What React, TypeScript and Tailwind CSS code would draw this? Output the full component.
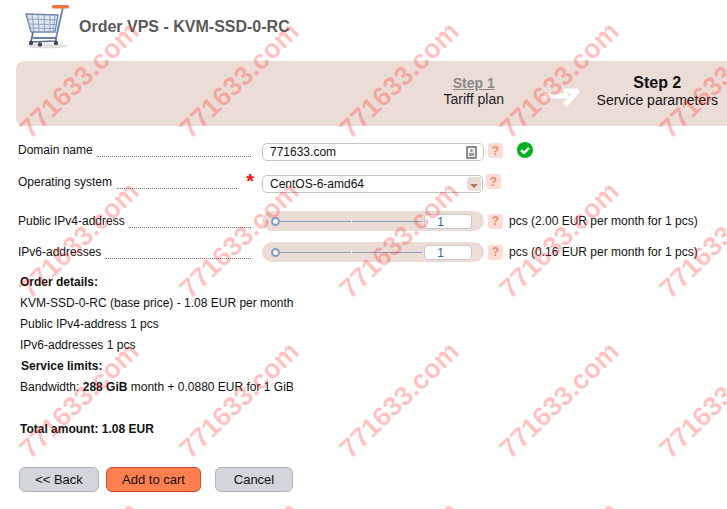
import React from "react";

const Help = () => (
  <span className="flex h-[15px] w-[15px] shrink-0 items-center justify-center rounded-[3px] bg-[#fcdcd5] text-[12px] font-bold leading-none text-[#ea8a6c]">
    ?
  </span>
);

const FieldLabel = ({ text, star }: { text: string; star?: boolean }) => (
  <div className="relative flex w-[233px] shrink-0 items-end">
    <span className="whitespace-nowrap leading-[15px]">{text}</span>
    <span className={`mb-[1px] ml-[4px] flex-1 border-b border-dotted border-[#777] ${star ? "mr-[14px] ml-[5px]" : ""}`} />
    {star && (
      <span className="absolute right-[-3px] top-[-4px] text-[20px] font-bold leading-[20px] text-[#f01010]">*</span>
    )}
  </div>
);

const Slider = ({ note }: { note: string }) => (
  <div className="flex items-center">
    <div className="flex h-[20px] w-[222px] items-center rounded-full bg-[#ecdcd6] pl-[9px] pr-[12px]">
      <span className="h-[9px] w-[9px] shrink-0 rounded-full border-2 border-[#8a9dbd] bg-[#f4f4f4]" />
      <div className="relative h-[1px] flex-1 bg-[#8a9dbd]">
        <span className="absolute left-[71px] top-[-1px] h-[3px] w-[1px] bg-white" />
      </div>
      <div className="ml-[2px] h-[15px] w-[48px] shrink-0 rounded-[4px] border border-[#c8c8c8] bg-white pr-[27px] text-right text-[12px] leading-[14px] text-[#1a6fa8]">
        1
      </div>
    </div>
    <span className="ml-[4px]"><Help /></span>
    <span className="ml-[6px] whitespace-nowrap">{note}</span>
  </div>
);

const CartIcon = () => (
  <svg width="46" height="44" viewBox="0 0 46 44" className="shrink-0">
    <ellipse cx="22" cy="41" rx="20" ry="2.5" fill="#000" opacity="0.12" />
    <path d="M1 9 L33 10 L30 27 L6 27 Z" fill="#dfe6f0" stroke="#7088ad" strokeWidth="1.4" />
    <path d="M7 9.5 L9 27 M13 9.5 L14 27 M19 10 L19.5 27 M25 10 L25 27 M30 10 L28 27 M2 14 L32 15 M3 19 L31 19.5 M5 23 L30 23.5" stroke="#8ea2c2" strokeWidth="1" fill="none" />
    <path d="M38 2 L31 33 L8 33" stroke="#6a82a8" strokeWidth="1.8" fill="none" />
    <path d="M8 27 L6 37 L31 36 L31 33" stroke="#55698c" strokeWidth="1.6" fill="none" />
    <rect x="27" y="0" width="17" height="3.5" rx="1.5" fill="#f2763f" />
    <circle cx="6" cy="38" r="2.2" fill="#3c4a63" />
    <circle cx="15" cy="39.5" r="2.2" fill="#3c4a63" />
    <circle cx="31" cy="38" r="2.2" fill="#3c4a63" />
  </svg>
);

const Watermarks = () => (
  <div className="pointer-events-none absolute inset-0 grid grid-cols-[repeat(5,160px)] auto-rows-[160px] overflow-hidden">
    {Array.from({ length: 20 }, (_, i) => (
      <div key={i} className="flex items-center justify-center">
        <span className="-rotate-[44deg] whitespace-nowrap text-[27px] font-bold leading-none text-[rgba(255,40,40,0.28)]">
          771633.com
        </span>
      </div>
    ))}
  </div>
);

export default function App() {
  return (
    <div className="relative h-[509px] w-[727px] overflow-hidden bg-white text-[12px] text-[#111] [font-family:'Liberation_Sans',Arial,sans-serif]">
      <div className="flex h-[61px] items-start pl-[25px] pt-[5px]">
        <CartIcon />
        <h1 className="ml-[8px] mt-[12px] whitespace-nowrap text-[16px] font-bold leading-[20px] text-[#5a5a5a]">
          Order VPS - KVM-SSD-0-RC
        </h1>
      </div>

      {/* Steps */}
      <div className="ml-[16px] flex h-[65px] items-start rounded-l-[8px] bg-[#ecdcd6] text-[14px]">
        <div className="ml-[388px] mt-[14px] w-[140px] text-center leading-[16px]">
          <div className="font-bold text-[#8a8a8a] underline">Step 1</div>
          <div className="text-[#222]">Tariff plan</div>
        </div>
        <svg width="36" height="20" viewBox="0 0 36 20" className="mt-[27px] shrink-0">
          <path d="M2 8 H22" stroke="#fff" strokeWidth="5" strokeLinecap="round" />
          <path d="M20 3 H33 L21 17" stroke="#fff" strokeWidth="5" fill="none" strokeLinejoin="round" />
        </svg>
        <div className="ml-[8px] mt-[13px] w-[140px] text-center text-[#111]">
          <div className="text-[16px] font-bold leading-[18px]">Step 2</div>
          <div className="leading-[16px]">Service parameters</div>
        </div>
      </div>

      {/* Form */}
      <div className="mt-[17px] pl-[18px]">
        <div className="flex h-[18px] items-start">
          <FieldLabel text="Domain name" />
          <div className="ml-[11px] flex h-[18px] w-[222px] items-center justify-between rounded-[5px] border border-[#c4c4c4] bg-white pl-[7px] pr-[6px]">
            <span className="text-[12px]">771633.com</span>
            <span className="relative h-[13px] w-[11px] rounded-[1px] border-2 border-[#8c8c8c] bg-[#f0f0f0]">
              <span className="absolute bottom-[1px] left-[1px] h-[3px] w-[5px] bg-[#999]" />
              <span className="absolute left-[2px] top-[1px] h-[3px] w-[3px] rounded-full bg-[#999]" />
            </span>
          </div>
          <span className="ml-[4px]"><Help /></span>
          <svg width="16" height="16" viewBox="0 0 16 16" className="ml-[14px] mt-[-1px]">
            <circle cx="8" cy="8" r="8" fill="#00b01e" />
            <path d="M4 8.2 L7 11 L12 5.8" stroke="#fff" strokeWidth="2.4" fill="none" />
          </svg>
        </div>

        <div className="mt-[14px] flex h-[18px] items-start">
          <FieldLabel text="Operating system" star />
          <div className="ml-[11px] flex h-[18px] w-[221px] items-center justify-between rounded-[5px] border border-[#c4c4c4] bg-white pl-[7px] pr-[1px]">
            <span className="text-[12px]">CentOS-6-amd64</span>
            <span className="flex h-[14px] w-[14px] items-center justify-center rounded-[4px] bg-[#ecdcd6]">
              <span className="mt-[3px] border-x-[4px] border-t-[4px] border-x-transparent border-t-[#a8795f]" />
            </span>
          </div>
          <span className="ml-[3px] mt-[-1px]"><Help /></span>
        </div>

        <div className="mt-[18px] flex h-[20px] items-center">
          <FieldLabel text="Public IPv4-address" />
          <div className="ml-[11px]">
            <Slider note="pcs (2.00 EUR per month for 1 pcs)" />
          </div>
        </div>

        <div className="mt-[11px] flex h-[20px] items-center">
          <FieldLabel text="IPv6-addresses" />
          <div className="ml-[11px]">
            <Slider note="pcs (0.16 EUR per month for 1 pcs)" />
          </div>
        </div>
      </div>

      {/* Order details */}
      <div className="mt-[10px] pl-[20px] leading-[21px]">
        <div className="font-bold">Order details:</div>
        <div>KVM-SSD-0-RC (base price) - 1.08 EUR per month</div>
        <div>Public IPv4-address 1 pcs</div>
        <div>IPv6-addresses 1 pcs</div>
        <div className="pl-[1px] font-bold">Service limits:</div>
        <div>
          Bandwidth: <b>288 GiB</b> month + 0.0880 EUR for 1 GiB
        </div>
        <div className="mt-[21px] font-bold">Total amount: 1.08 EUR</div>
      </div>

      <div className="mt-[27px] flex pl-[19px] text-[13px]">
        <button className="h-[25px] w-[80px] rounded-[6px] border border-[#b0b4ba] bg-[#d2d5da]">&lt;&lt; Back</button>
        <button className="ml-[7px] h-[25px] w-[95px] rounded-[6px] border border-[#d14a2a] bg-[#ff7f50]">Add to cart</button>
        <button className="ml-[14px] h-[25px] w-[78px] rounded-[6px] border border-[#b0b4ba] bg-[#d2d5da]">Cancel</button>
      </div>

      <Watermarks />
    </div>
  );
}
